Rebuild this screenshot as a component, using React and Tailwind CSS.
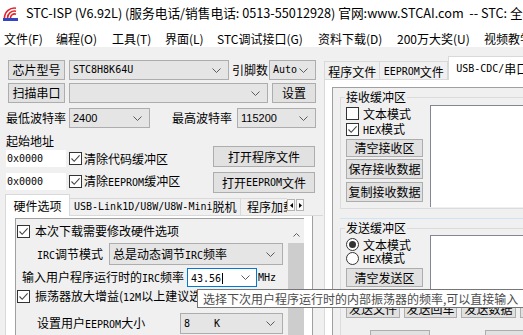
import React from 'react';

const CJK = "font-['Noto_Sans_CJK_SC','Noto_Sans',sans-serif]";
const SONG = "font-['DejaVu_Sans_Mono','Noto_Sans_CJK_SC',monospace] text-[10px]";
const NUM = "font-['Liberation_Sans','Noto_Sans_CJK_SC',sans-serif] text-[11px]";

// combobox arrow
const Chevron = () => (
  <svg width="9" height="5" viewBox="0 0 9 5" className="shrink-0">
    <path d="M0.5 0.5L4.5 4.5L8.5 0.5" fill="none" stroke="#5a5a5a" />
  </svg>
);

const Btn = ({ className = '', children }) => (
  <div className={`flex shrink-0 items-center justify-center border border-[#adadad] bg-[#e1e1e1] text-[12px] leading-none ${className}`}>
    {children}
  </div>
);

const Combo = ({ className = '', textClass = 'text-[12px]', children }) => (
  <div className={`flex shrink-0 items-center border border-[#adadad] bg-[#e5e5e5] pl-[3px] pr-[7px] ${className}`}>
    <div className={`flex-1 whitespace-pre leading-none ${textClass}`}>{children}</div>
    <Chevron />
  </div>
);

const Box = ({ checked }) => (
  <span className="flex h-[13px] w-[13px] shrink-0 items-center justify-center border border-[#333333] bg-white">
    {checked && (
      <svg width="11" height="11" viewBox="0 0 11 11">
        <path d="M1.5 5.5L4.2 8.3L9.6 2.4" fill="none" stroke="#444444" strokeWidth="1.1" />
      </svg>
    )}
  </span>
);

const Radio = ({ checked }) => (
  <span className="flex h-[13px] w-[13px] shrink-0 items-center justify-center rounded-full border border-[#333333] bg-white">
    {checked && <span className="h-[7px] w-[7px] rounded-full bg-[#333333]" />}
  </span>
);

const menus = [
  ['文件(F)', 'w-[52px]'],
  ['编程(O)', 'w-[56px]'],
  ['工具(T)', 'w-[53px]'],
  ['界面(L)', 'w-[52px]'],
  ['STC调试接口(G)', 'w-[101px]'],
  ['资料下载(D)', 'w-[79px]'],
  ['200万大奖(U)', 'w-[87px]'],
  ['视频教学(V)', 'w-[80px]'],
];

const LeftPane = () => (
  <div className="w-[323px] shrink-0">
    {/* chip row */}
    <div className="mt-[13px] flex h-[20px] items-center">
      <Btn className="ml-[8px] h-[20px] w-[57px]">芯片型号</Btn>
      <Combo className="ml-[4px] h-[20px] w-[160px]" textClass={SONG}>STC8H8K64U</Combo>
      <span className="ml-[3px] w-[37px] text-[12px] leading-none">引脚数</span>
      <Combo className="h-[20px] w-[47px]" textClass={SONG}>Auto</Combo>
    </div>
    <div className="mt-[3px] flex h-[20px] items-center">
      <Btn className="ml-[8px] h-[20px] w-[57px]">扫描串口</Btn>
      <Combo className="ml-[4px] h-[20px] w-[199px]"> </Combo>
      <Btn className="ml-[4px] h-[20px] w-[44px]">设置</Btn>
    </div>
    <div className="mt-[5px] flex h-[20px] items-center">
      <span className="ml-[6px] w-[63px] text-[12px] leading-none">最低波特率</span>
      <Combo className="h-[20px] w-[81px]" textClass={NUM}>2400</Combo>
      <span className="ml-[22px] w-[65px] text-[12px] leading-none">最高波特率</span>
      <Combo className="h-[20px] w-[79px]" textClass={NUM}>115200</Combo>
    </div>

    {/* address + open file */}
    <div className="flex h-[66px]">
      <div className="ml-[6px] w-[200px]">
        <div className="mt-[6px] h-[14px] text-[12px] leading-[14px]">起始地址</div>
        <div className="mt-[2px] flex h-[17px] items-center">
          <div className={`flex h-[17px] w-[60px] items-center bg-white pl-[1px] ${SONG}`}>0x0000</div>
          <span className="ml-[3px]"><Box checked /></span>
          <span className="ml-[2px] text-[12px] leading-none">清除代码缓冲区</span>
        </div>
        <div className="mt-[6px] flex h-[17px] items-center">
          <div className={`flex h-[17px] w-[60px] items-center bg-white pl-[1px] ${SONG}`}>0x0000</div>
          <span className="ml-[3px]"><Box checked /></span>
          <span className="ml-[2px] text-[12px] leading-none">清除<span className={SONG}>EEPROM</span>缓冲区</span>
        </div>
      </div>
      <div className="ml-[7px]">
        <Btn className="mt-[18px] h-[21px] w-[102px]">打开程序文件</Btn>
        <Btn className="mt-[5px] h-[21px] w-[102px]">打开<span className={SONG}>EEPROM</span>文件</Btn>
      </div>
    </div>

    {/* option tabs */}
    <div className="flex h-[22px] items-end pl-[5px]">
      <div className="flex h-[22px] w-[65px] items-center justify-center border-l border-r border-t border-[#d9d9d9] bg-white text-[12px] leading-none">
        硬件选项
      </div>
      <div className="flex h-[18px] w-[171px] items-center whitespace-nowrap border-b border-r border-t border-[#d9d9d9] pl-[4px] text-[12px] leading-none">
        <span className={SONG}>USB-Link1D/U8W/U8W-Mini</span>脱机
      </div>
      <div className="flex h-[18px] w-[46px] items-center overflow-hidden whitespace-nowrap border-b border-t border-[#d9d9d9] pl-[6px] text-[12px] leading-none">
        程序加载
      </div>
      <div className="flex h-[18px] w-[17px] items-start gap-[1px] border-b border-[#d9d9d9] pt-[1px]">
        <div className="flex h-[12px] w-[8px] items-center justify-center border border-[#b4b4b4] bg-[#fafafa]">
          <svg width="3" height="5" viewBox="0 0 3 5"><path d="M3 0L0 2.5L3 5Z" fill="#000" /></svg>
        </div>
        <div className="flex h-[12px] w-[8px] items-center justify-center border border-[#b4b4b4] bg-[#fafafa]">
          <svg width="3" height="5" viewBox="0 0 3 5"><path d="M0 0L3 2.5L0 5Z" fill="#000" /></svg>
        </div>
      </div>
      <div className="h-[18px] flex-1 border-b border-[#d9d9d9]" />
    </div>
    <div className="ml-[5px] h-[130px] w-[308px] border-l border-r border-l-[#d9d9d9] border-r-[#a0a0a0] bg-white pl-[9px] pt-[2px]">
      <div className="flex h-[130px] w-[289px] border-l border-t border-[#a0a0a0] bg-[#f0f0f0]">
        <div className="w-[272px] text-[12px]">
          <div className="mt-[5px] flex h-[14px] items-center pl-[1px]">
            <Box checked />
            <span className="ml-[5px] leading-none">本次下载需要修改硬件选项</span>
          </div>
          <div className="mt-[5px] flex h-[22px] items-center">
            <span className="ml-[21px] w-[72px] leading-none"><span className={SONG}>IRC</span>调节模式</span>
            <Combo className="h-[22px] w-[174px]">总是动态调节<span className={SONG}>IRC</span>频率</Combo>
          </div>
          <div className="mt-[3px] flex h-[19px] items-center">
            <span className="ml-[6px] w-[165px] leading-none">输入用户程序运行时的<span className={SONG}>IRC</span>频率</span>
            <div className="flex h-[19px] w-[70px] items-center border border-[#0078d7] bg-white pl-[3px] pr-[6px]">
              <span className={`flex-1 leading-none ${SONG}`}>
                43.56<span className="ml-[1px] inline-block h-[11px] w-px translate-y-[2px] bg-black" />
              </span>
              <Chevron />
            </div>
            <span className={`ml-[1px] leading-none ${SONG}`}>MHz</span>
          </div>
          <div className="mt-[2px] flex h-[14px] items-center pl-[1px]">
            <Box checked />
            <span className="ml-[5px] whitespace-nowrap leading-none">振荡器放大增益(<span className={SONG}>12M</span>以上建议选择)</span>
          </div>
          <div className="mt-[10px] flex h-[21px] items-center">
            <span className="ml-[21px] w-[143px] leading-none">设置用户<span className={SONG}>EEPROM</span>大小</span>
            <Combo className="h-[21px] w-[103px]" textClass={SONG}>{'8    K'}</Combo>
          </div>
        </div>
        {/* vertical scrollbar */}
        <div className="flex w-[16px] flex-col">
          <div className="flex h-[24px] justify-center pt-[14px]">
            <svg width="7" height="4" viewBox="0 0 7 4"><path d="M0.5 3.5L3.5 0.5L6.5 3.5" fill="none" stroke="#606060" /></svg>
          </div>
          <div className="flex-1 bg-[#cdcdcd]" />
        </div>
      </div>
    </div>
  </div>
);

const RightPane = () => (
  <div className="w-[240px] shrink-0">
    <div className="flex h-[33px] items-end">
      <div className="ml-[1px] flex h-[19px] w-[59px] items-center justify-center border border-[#d9d9d9] pt-[2px] text-[12px] leading-none">
        程序文件
      </div>
      <div className="flex h-[19px] w-[71px] items-center justify-center whitespace-nowrap border-b border-r border-t border-[#d9d9d9] pt-[2px] text-[12px] leading-none">
        <span className={SONG}>EEPROM</span>文件
      </div>
      <div className="flex h-[24px] w-[120px] items-center whitespace-nowrap border-l border-r border-t border-[#d9d9d9] bg-white pl-[7px] text-[12px] leading-none">
        <span className={SONG}>USB-CDC/</span>串口助手
      </div>
    </div>
    <div className="ml-[1px] h-[260px] border-l border-[#d9d9d9] bg-white pl-[7px] pt-[7px]">
      <div className="h-[300px] border-l border-t border-[#a0a0a0] bg-[#f0f0f0] pl-[7px] text-[12px]">
        {/* receive buffer */}
        <fieldset className="mt-[2px] border border-[#dcdcdc] pb-[1px] pl-[4px]">
          <legend className="px-[1px] leading-[14px]">接收缓冲区</legend>
          <div className="flex">
            <div className="w-[78px] shrink-0 pl-[1px]">
              <div className="mt-[3px] flex h-[13px] items-center">
                <Box />
                <span className="ml-[4px] leading-none">文本模式</span>
              </div>
              <div className="mt-[3px] flex h-[13px] items-center">
                <Box checked />
                <span className="ml-[4px] leading-none"><span className={SONG}>HEX</span>模式</span>
              </div>
              <Btn className="mt-[3px] h-[18px] w-[77px]">清空接收区</Btn>
              <Btn className="mt-[2px] h-[20px] w-[77px]">保存接收数据</Btn>
              <Btn className="mt-[3px] h-[20px] w-[77px]">复制接收数据</Btn>
            </div>
            <div className="ml-[7px] mt-[1px] h-[102px] flex-1 border-l border-t border-[#828790] bg-white" />
          </div>
        </fieldset>
        <div className="mt-[9px] h-px bg-[#cfe3f5]" />
        {/* send buffer */}
        <fieldset className="mt-[2px] border border-[#dcdcdc] pl-[4px]">
          <legend className="px-[1px] leading-[14px]">发送缓冲区</legend>
          <div className="flex">
            <div className="w-[78px] shrink-0 pl-[1px]">
              <div className="mt-[3px] flex h-[13px] items-center">
                <Radio checked />
                <span className="ml-[4px] leading-none">文本模式</span>
              </div>
              <div className="mt-[1px] flex h-[13px] items-center">
                <Radio />
                <span className="ml-[4px] leading-none"><span className={SONG}>HEX</span>模式</span>
              </div>
              <Btn className="mt-[3px] h-[19px] w-[77px]">清空发送区</Btn>
            </div>
            <div className="ml-[7px] h-[57px] flex-1 border-l border-t border-[#828790] bg-white" />
          </div>
          <div className="mt-[8px] flex gap-[4px] pl-[1px]">
            <Btn className="h-[18px] w-[54px]">发送文件</Btn>
            <Btn className="h-[18px] w-[53px]">发送回车</Btn>
            <Btn className="h-[18px] w-[55px]">发送数据</Btn>
            <Btn className="h-[18px] w-[60px]">自动发送</Btn>
          </div>
          <div className="mt-[12px] flex pl-[25px]">
            <Btn className="h-[20px] w-[60px]" />
            <Btn className="ml-[55px] h-[20px] w-[60px]" />
          </div>
        </fieldset>
      </div>
    </div>
  </div>
);

export default function App() {
  return (
    <div className={`relative h-[335px] w-[523px] overflow-hidden bg-[#f0f0f0] text-black ${CJK}`}>
      {/* title bar */}
      <div className="flex h-[27px] items-center whitespace-pre bg-white">
        <svg width="15" height="14" viewBox="0 0 15 14" className="ml-[3px] shrink-0">
          <path d="M1.5 11A10 10 0 0 1 13 1.2" fill="none" stroke="#e3242b" strokeWidth="1.6" />
          <path d="M4.5 11A7 7 0 0 1 13 4.2" fill="none" stroke="#e3242b" strokeWidth="1.6" />
          <path d="M7.5 11A4 4 0 0 1 13 7.2" fill="none" stroke="#e3242b" strokeWidth="1.6" />
          <rect x="0" y="11" width="15" height="3" fill="#3146c2" />
        </svg>
        <span className="ml-[8px] text-[12.7px] leading-none">
          STC-ISP (V6.92L) (服务电话/销售电话: 0513-55012928) 官网:www.STCAI.com  -- STC: 全球最大的8051单片机设计公司
        </span>
      </div>
      {/* menu bar */}
      <div className="flex h-[20px] items-center bg-white pl-[4px] pt-[3px] text-[12px] leading-none">
        {menus.map(([label, w]) => (
          <span key={label} className={`shrink-0 whitespace-nowrap ${w}`}>{label}</span>
        ))}
      </div>
      <div className="flex">
        <LeftPane />
        <RightPane />
      </div>
      {/* tooltip */}
      <div className="absolute left-[197px] top-[289px] flex h-[19px] w-[340px] items-center whitespace-nowrap border border-[#767676] bg-white pl-[5px] text-[12px] leading-none text-[#4c4c4c]">
        选择下次用户程序运行时的内部振荡器的频率,可以直接输入
      </div>
    </div>
  );
}
